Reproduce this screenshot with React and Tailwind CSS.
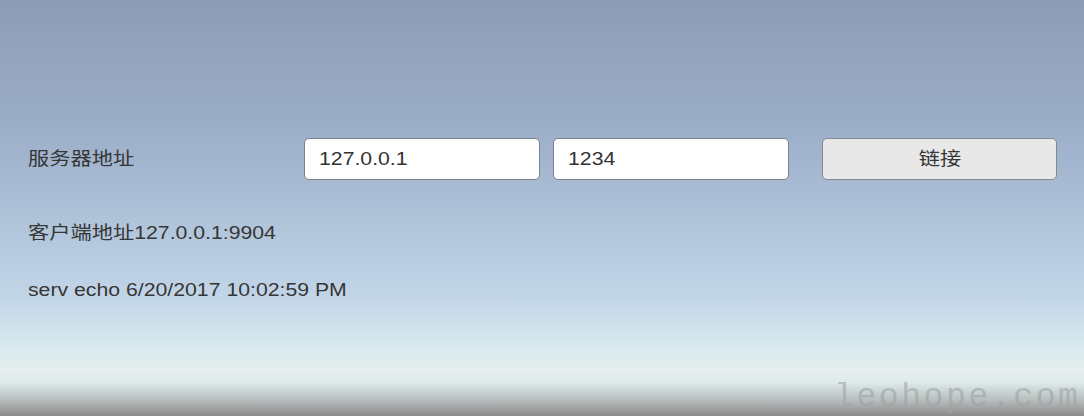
const font = { fontFamily: '"Liberation Sans", "Noto Sans CJK SC", sans-serif' };

// the whole shot is a bit stretched sideways, so the text is too
const Wide = ({ children, className = "origin-left" }) => {
  return <span className={`inline-block scale-x-[1.18] whitespace-nowrap ${className}`}>{children}</span>;
};

const Field = ({ value }) => {
  return (
    <div className="flex h-[42px] w-[236px] items-center rounded-[5px] border border-[#7d828a] bg-white pl-[14px] text-[18px] text-[#333]">
      <Wide>{value}</Wide>
    </div>
  );
};

export default function App() {
  return (
    <div
      className="relative h-[416px] w-full overflow-hidden bg-[linear-gradient(180deg,#8d9bb7_0%,#9badc8_30%,#b1c5db_55%,#c3d6e8_72%,#d9eaee_84%,#e6eeee_89%,#dde9e9_92%,#b9c0c0_96%,#8c8a8a_100%)] pt-[138px] text-[#363636]"
      style={font}
    >
      {/* 服务器地址 row */}
      <div className="flex h-[42px] items-center">
        <div className="w-[304px] pl-[28px] text-[18px]">
          <Wide>服务器地址</Wide>
        </div>
        <Field value="127.0.0.1" />
        <div className="ml-[13px]">
          <Field value="1234" />
        </div>
        <button className="ml-[33px] flex h-[42px] w-[235px] items-center justify-center rounded-[5px] border border-[#85888d] bg-[#e8e8e8] text-[18px] text-[#363636]">
          <Wide className="origin-center">链接</Wide>
        </button>
      </div>

      <div className="mt-[41px] pl-[28px] text-[18px] leading-[24px]">
        <Wide>客户端地址127.0.0.1:9904</Wide>
      </div>
      <div className="mt-[33px] pl-[28px] text-[18px] leading-[24px]">
        <Wide>serv echo 6/20/2017 10:02:59 PM</Wide>
      </div>

      {/* watermark */}
      <div
        className="absolute bottom-[2px] left-[834px] text-[33px] leading-none tracking-[2.6px] whitespace-nowrap text-[#9ea4a4] opacity-60"
        style={{ fontFamily: '"Liberation Mono", monospace' }}
      >
        leohope.com
      </div>
    </div>
  );
}
